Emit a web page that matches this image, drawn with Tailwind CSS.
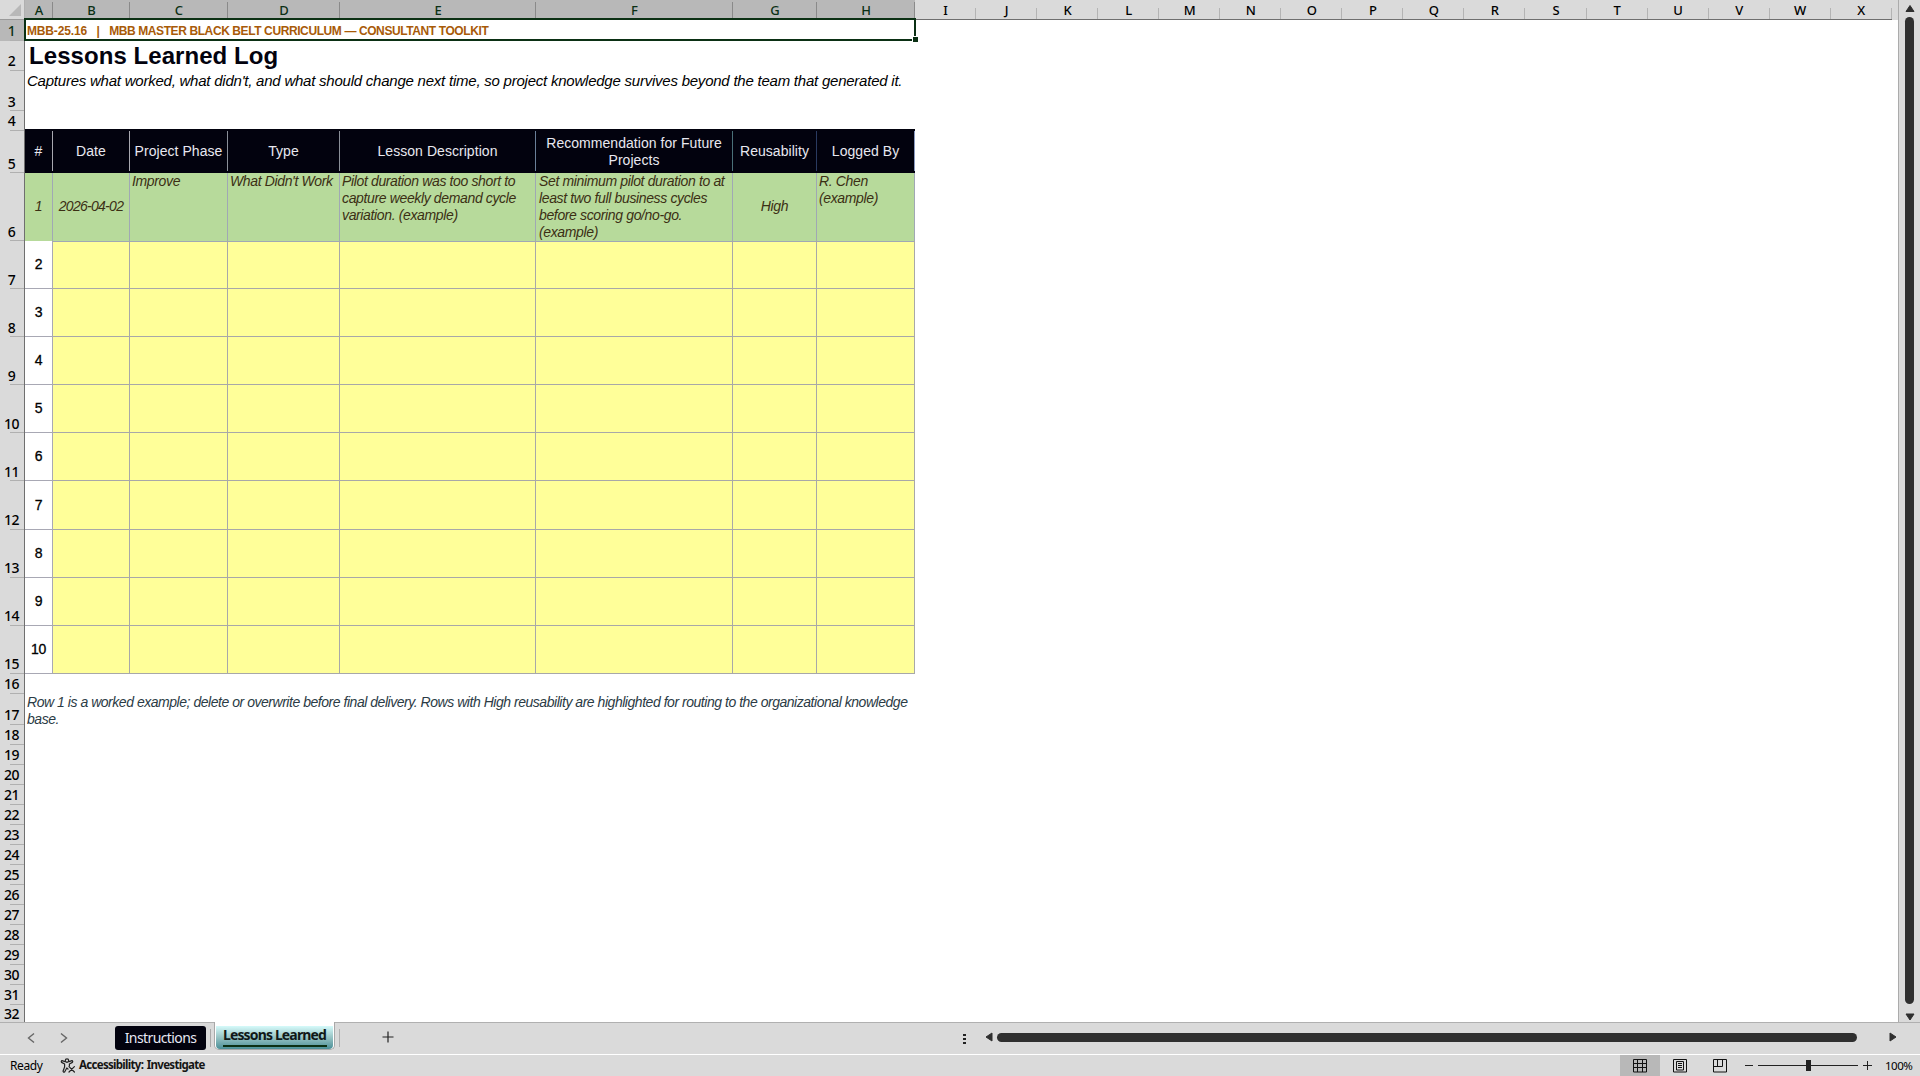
<!DOCTYPE html>
<html lang="en">
<head>
    <meta charset="UTF-8">
    <meta name="viewport" content="width=device-width, initial-scale=1.0">
    <title>Lessons Learned Log</title>
    <script src="https://cdn.jsdelivr.net/npm/@tailwindcss/browser@4"></script>
</head>
<body class="w-[1920px] h-[1076px] overflow-hidden bg-[#dadada] font-['Liberation_Sans',Arial,sans-serif] text-black flex flex-col">

    <div class="flex h-[1022px]">
        <!-- Sheet -->
        <div class="w-[1899px] flex flex-col overflow-hidden border-r border-[#ababab]">
            <!-- Column letters -->
            <div class="flex h-5 shrink-0 font-['Noto_Sans',sans-serif] text-[13px] font-medium">
                <div class="w-[25px] flex shrink-0 items-end justify-end pr-[3px] pb-[3px] border-b border-r border-r-[#b0b0b0] border-b-[#9a9a9a]">
                    <svg width="12" height="12" viewBox="0 0 12 12"><path d="M12 0V12H0Z" fill="#b8b8b8"/></svg>
                </div>
                <div id="colHeaders" class="flex"></div>
            </div>

            <div class="flex flex-1 min-h-0">
                <!-- Row numbers -->
                <div id="rowHeaders" class="w-[25px] shrink-0 border-r border-[#6f6f6f] font-['Noto_Sans',sans-serif] text-[14px] font-medium"></div>

                <!-- Cells -->
                <div class="flex-1 bg-white">
                    <div class="relative w-[891px] h-[21px] flex items-center pl-[2px] text-[12px] font-bold text-[#a85a08] whitespace-pre"><span class="tracking-[-0.16px]">MBB-25.16   |   </span><span class="tracking-[-0.4px]">MBB MASTER BLACK BELT CURRICULUM — CONSULTANT TOOLKIT</span>
                        <div class="absolute -left-[1px] -top-[2px] w-[892px] h-[23px] border-2 border-[#0b3014]"></div>
                        <div class="absolute left-[887px] top-[16px] w-[6px] h-[6px] bg-[#0b3014] border-t border-l border-white"></div>
                    </div>
                    <div class="h-[30px] pl-[4px] text-[24px] leading-[29px] font-bold tracking-[0.06px] text-[#02020e] whitespace-nowrap">Lessons Learned Log</div>
                    <div class="h-[58px] pl-[2px] pt-px text-[15px] leading-[18px] italic tracking-[-0.23px] whitespace-nowrap">Captures what worked, what didn't, and what should change next time, so project knowledge survives beyond the team that generated it.</div>

                    <!-- Table head -->
                    <div class="grid grid-cols-[28px_77px_98px_112px_196px_197px_84px_98px] w-[890px] h-[44px] bg-[#02020e] py-[2px] text-[14px] leading-[17px] tracking-[0.05px] text-center text-[#e8e8f0]">
                        <div class="flex items-center justify-center pt-px border-r border-[#a8a8b0]">#</div>
                        <div class="flex items-center justify-center pt-px border-r border-[#a8a8b0]">Date</div>
                        <div class="flex items-center justify-center pt-px border-r border-[#8a8f98] whitespace-nowrap">Project Phase</div>
                        <div class="flex items-center justify-center pt-px border-r border-[#8a8f98]">Type</div>
                        <div class="flex items-center justify-center pt-px border-r border-[#6a7f98]">Lesson Description</div>
                        <div class="flex items-center justify-center pt-px border-r border-[#4a7078]">Recommendation for Future<br>Projects</div>
                        <div class="flex items-center justify-center pt-px border-r border-[#2a3a60]">Reusability</div>
                        <div class="flex items-center justify-center pt-px border-r border-[#8a9ac0]">Logged By</div>
                    </div>

                    <!-- Worked example -->
                    <div class="grid grid-cols-[28px_77px_98px_112px_196px_197px_84px_98px] w-[890px] h-[68px] bg-[#b7da9b] text-[14px] leading-[17px] italic tracking-[-0.36px] text-[#3b2f14] whitespace-nowrap">
                        <div class="flex items-center justify-center pb-px border-r border-b border-[#a0a8b4]">1</div>
                        <div class="flex items-center justify-center pb-px border-r border-b border-[#a0a8b4] tracking-[-0.72px]">2026-04-02</div>
                        <div class="pl-[2px] border-r border-b border-[#a0a8b4]">Improve</div>
                        <div class="pl-[2px] border-r border-b border-[#a0a8b4]">What Didn't Work</div>
                        <div class="pl-[2px] border-r border-b border-[#a0a8b4]">Pilot duration was too short to<br>capture weekly demand cycle<br>variation. (example)</div>
                        <div class="pl-[3px] border-r border-b border-[#a0a8b4]">Set minimum pilot duration to at<br>least two full business cycles<br>before scoring go/no-go.<br>(example)</div>
                        <div class="flex items-center justify-center pb-px border-r border-b border-[#a0a8b4]">High</div>
                        <div class="pl-[2px] border-r border-b border-[#a0a8b4]">R. Chen<br>(example)</div>
                    </div>

                    <div id="entries"></div>

                    <div class="pt-[20px] pl-[2px] text-[14px] leading-[17px] italic tracking-[-0.465px] text-[#2b3b45] whitespace-nowrap">Row 1 is a worked example; delete or overwrite before final delivery. Rows with High reusability are highlighted for routing to the organizational knowledge<br>base.</div>
                </div>
            </div>
        </div>

        <!-- Vertical scrollbar -->
        <div class="flex-1 flex flex-col items-center pt-[5px]">
            <svg class="shrink-0" width="10" height="8" viewBox="0 0 10 8"><path d="M5 0.5L9 6.5H1Z" fill="#2f2f2f" stroke="#2f2f2f" stroke-linejoin="round"/></svg>
            <div class="w-[9px] h-[987px] mt-[4px] rounded-full bg-[#2f2f2f]"></div>
            <svg class="mt-[9px] shrink-0" width="10" height="8" viewBox="0 0 10 8"><path d="M1 1H9L5 7Z" fill="#2f2f2f" stroke="#2f2f2f" stroke-linejoin="round"/></svg>
        </div>
    </div>

    <!-- Sheet tabs -->
    <div class="relative flex h-8 shrink-0 border-t border-[#b0b0b0] font-['Noto_Sans',sans-serif]">
        <div class="flex items-center w-[115px] pl-[27px] gap-[25px] pb-[2px]">
            <svg width="8" height="12" viewBox="0 0 8 12" fill="none" stroke="#666" stroke-width="1.4"><path d="M7 1.5L1.5 6L7 10.5"/></svg>
            <svg width="8" height="12" viewBox="0 0 8 12" fill="none" stroke="#666" stroke-width="1.4"><path d="M1 1.5L6.5 6L1 10.5"/></svg>
        </div>
        <div class="mt-[3px] w-[91px] h-6 rounded-[3px] bg-[#02020e] text-[#e6e8f4] text-[14px] tracking-[-0.6px] leading-[24px] text-center">Instructions</div>
        <div class="mt-[6px] ml-[4px] w-px h-[18px] bg-[#a8a8a8]"></div>
        <div class="-mt-px ml-[3px] w-[121px] h-[28px] rounded-b-[5px] border border-t-0 border-[#a8a8a8] bg-white px-px pb-px pt-[4px]">
            <div class="h-[23px] rounded-b-[4px] bg-linear-to-b from-[#d5fafa] via-[#96c3c4] to-[#4a8f97]">
                <div class="mx-auto w-[104px] h-[21px] border-b-2 border-[#0b3014] text-[14px] leading-[17px] font-bold tracking-[-0.85px] text-center whitespace-nowrap text-[#101818]">Lessons Learned</div>
            </div>
        </div>
        <div class="mt-[6px] ml-[4px] w-px h-[18px] bg-[#b0b0b0]"></div>
        <svg class="mt-[8px] ml-[42px]" width="12" height="12" viewBox="0 0 12 12" stroke="#222" stroke-width="1.2"><path d="M6 .5V11.5M.5 6H11.5"/></svg>

        <div class="flex-1"></div>
        <div class="flex flex-col gap-[2px] mt-[11px] mr-[19px]">
            <div class="w-[3px] h-[2px] bg-[#222]"></div>
            <div class="w-[3px] h-[2px] bg-[#222]"></div>
            <div class="w-[3px] h-[2px] bg-[#222]"></div>
        </div>
        <svg class="mt-[9px]" width="8" height="10" viewBox="0 0 8 10"><path d="M7 1V9L1 5Z" fill="#2f2f2f" stroke="#2f2f2f" stroke-linejoin="round"/></svg>
        <div class="mt-[10px] ml-[4px] w-[860px] h-[9px] rounded-full bg-[#2f2f2f]"></div>
        <svg class="mt-[9px] ml-[32px] mr-[23px]" width="8" height="10" viewBox="0 0 8 10"><path d="M1 1V9L7 5Z" fill="#2f2f2f" stroke="#2f2f2f" stroke-linejoin="round"/></svg>
    </div>

    <!-- Status bar -->
    <div class="flex items-center flex-1 border-t border-white font-['Noto_Sans',sans-serif] text-[11.5px]">
        <span class="ml-[10px] w-[50px] text-[12px] tracking-[-0.4px]">Ready</span>
        <svg width="16" height="16" viewBox="0 0 16 16" fill="none" stroke="#222" stroke-width="1.2" stroke-linejoin="round" stroke-linecap="round">
            <circle cx="7" cy="2.6" r="1.7"/>
            <path d="M5 3.6L2 2.6Q.8 3.4 1.6 4.4L4.6 6V9L3 13.2Q3.4 14.6 4.6 14L6.8 10L8 11M9 3.6L12 2.6Q13.2 3.4 12.4 4.4L9.4 6V8"/>
            <path d="M9 8.6L14.4 14M14.4 8.6L9 14"/>
        </svg>
        <span class="ml-[3px] font-bold tracking-[-0.7px] [word-spacing:1.2px] pb-px text-[#151515]">Accessibility: Investigate</span>
        <div class="flex-1"></div>
        <div class="w-10 h-full bg-[#b8b8b8] flex items-center justify-center">
            <svg width="14" height="14" viewBox="0 0 14 14" fill="none" stroke="#111" stroke-width="1"><path d="M.5 .5H13.5V13H.5ZM.5 4.5H13.5M.5 8.5H13.5M4.5 .5V13M9.5 .5V13"/></svg>
        </div>
        <div class="w-10 flex justify-center">
            <svg width="14" height="14" viewBox="0 0 14 14" fill="none" stroke="#111" stroke-width="1"><path d="M.5 .5H13.5V13H.5ZM3.5 2.5H10.5V11H3.5ZM5 4.5H9M5 6.5H9M5 8.5H9"/></svg>
        </div>
        <div class="w-10 flex justify-center">
            <svg width="14" height="14" viewBox="0 0 14 14" fill="none" stroke="#111" stroke-width="1"><path d="M.5 .5H13.5V13H.5ZM4.5 .5V7M.5 7.5H9.5V.5"/></svg>
        </div>
        <div class="ml-[5px] w-[8px] h-px bg-[#222]"></div>
        <div class="relative ml-[5px] w-[100px] h-px bg-[#222]">
            <div class="absolute left-[48px] -top-[5px] w-[5px] h-[11px] bg-[#222]"></div>
        </div>
        <svg class="ml-[5px]" width="9" height="9" viewBox="0 0 9 9" stroke="#222"><path d="M4.5 0V9M0 4.5H9"/></svg>
        <span class="ml-[13px] w-[35px] tracking-[-0.5px]">100%</span>
    </div>

    <script>
        const cols = [["A", 28], ["B", 77], ["C", 98], ["D", 112], ["E", 196], ["F", 197], ["G", 84], ["H", 98]];
        for (const letter of "IJKLMNOPQRSTUVWX") cols.push([letter, 61.06]);

        const colHeaders = document.getElementById("colHeaders");
        cols.forEach(([letter, width], i) => {
            const selected = i < 8;
            const cell = document.createElement("div");
            cell.className = selected
                ? "flex shrink-0 bg-[#b8b8b8] text-[#0b3014] border-b border-[#8a8a8a]"
                : "flex shrink-0 border-b border-[#6f6f6f]";
            cell.style.width = width + "px";
            cell.innerHTML = `<span class="flex-1 text-center leading-[21px] pl-px">${letter}</span>` +
                (selected ? '<span class="w-px mt-[2px] bg-[#8a8a8a]"></span>' : '<span class="w-px mt-[8px] bg-[#b4b4b4]"></span>');
            colHeaders.appendChild(cell);
        });

        const rows = [21, 30, 40, 20, 42, 68, 48, 48, 48, 48, 48, 49, 48, 48, 48, 20, 31];
        while (rows.length < 31) rows.push(20);
        rows.push(17); // last row is cut by the tab bar

        const rowHeaders = document.getElementById("rowHeaders");
        rows.forEach((height, i) => {
            const cell = document.createElement("div");
            cell.className = i === 0
                ? "flex flex-col justify-end bg-[#b8b8b8] text-[#0b3014]"
                : "flex flex-col justify-end";
            cell.style.height = height + "px";
            let leading = "leading-[18px]";
            if (i < 2) leading = "leading-[19px]";
            if ((height >= 40 && i < 11) || i === 31) leading = "leading-[17px]";
            cell.innerHTML = `<span class="text-center tracking-[-0.5px] pr-[1px] ${leading}">${i + 1}</span>` +
                (i < 31 ? '<span class="h-px shrink-0 ml-[10px] bg-[#b0b0b0]"></span>' : '');
            rowHeaders.appendChild(cell);
        });

        // Blank log entries 2-10
        const entries = document.getElementById("entries");
        for (let n = 2; n <= 10; n++) {
            const row = document.createElement("div");
            row.className = "grid grid-cols-[28px_77px_98px_112px_196px_197px_84px_98px] w-[890px] bg-[#ffff99] text-[14px] tracking-[-0.4px]";
            row.style.height = rows[n + 4] + "px";
            row.innerHTML = `<div class="flex items-center justify-center bg-white border-r border-b border-[#a8a8b4] [-webkit-text-stroke:0.3px_black]">${n}</div>` +
                '<div class="border-r border-b border-[#a8a8a8]"></div>'.repeat(7);
            entries.appendChild(row);
        }
    </script>
</body>
</html>
